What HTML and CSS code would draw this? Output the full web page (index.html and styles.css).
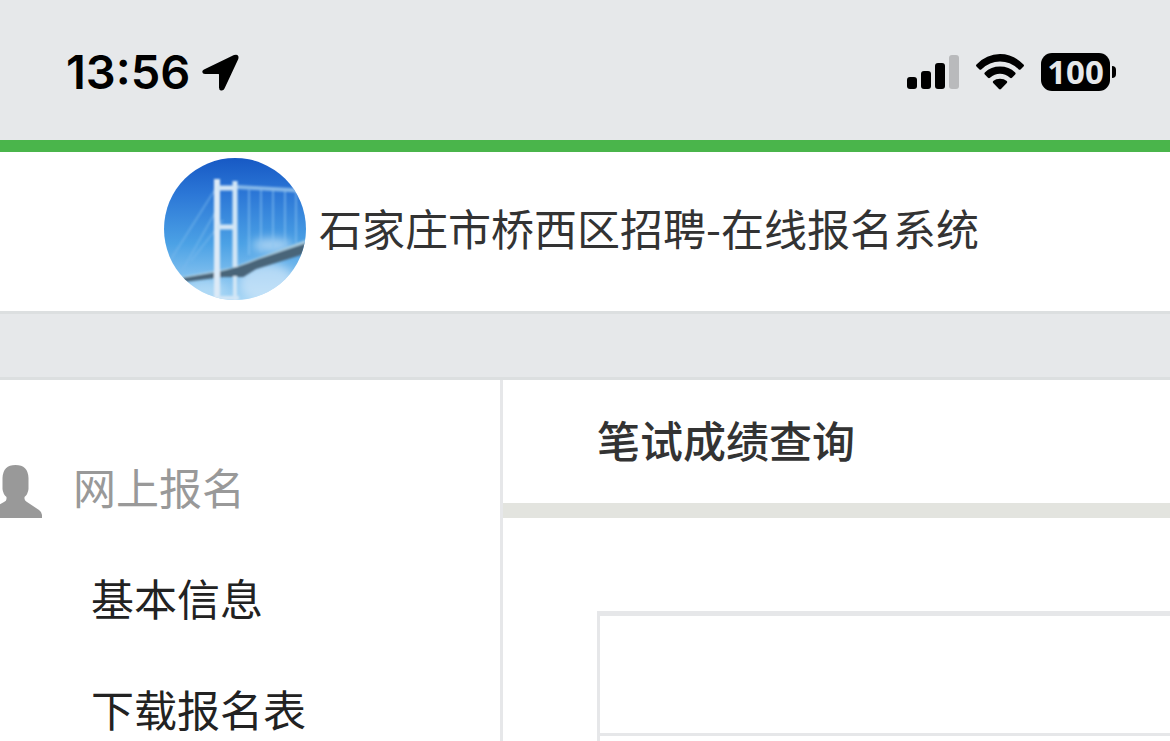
FILE: index.html
```html
<!DOCTYPE html>
<html lang="zh-CN">
<head>
<meta charset="utf-8">
<meta name="viewport" content="width=device-width, initial-scale=1">
<title>石家庄市桥西区招聘-在线报名系统</title>
<link rel="stylesheet" href="styles.css">
</head>
<body>
<div class="status">
  <div class="status-left">
    <time class="clock">13:56</time>
    <svg class="location" width="37" height="37" viewBox="0 0 37 37" aria-hidden="true"><path d="M2 15.500 32 1Q37.500-.5 36.300 5L22.500 34.500Q21.500 37 19 36.500 17 36 17 33.500V20.500Q17 20 16.500 20H3Q.5 20 .3 18 .2 16.500 2 15.500Z"/></svg>
  </div>
  <div class="status-right">
    <svg width="52" height="36" viewBox="0 0 52 36" aria-hidden="true"><rect y="23" width="10" height="12" rx="3"/><rect x="14" y="17" width="10" height="18" rx="3"/><rect x="28" y="9" width="10" height="26" rx="3"/><rect x="42" y="1" width="10" height="34" rx="3" fill="#b9babc"/></svg>
    <svg width="50" height="38" viewBox="0 0 50 38" aria-hidden="true"><path d="M1.500 11.500Q11.500 1 25 1T48.500 11.500Q49.500 12.500 48.500 13.500L45.500 16.500Q44.500 17.300 43.500 16.300 35.500 8.500 25 8.500T6.500 16.300Q5.500 17.300 4.500 16.500L1.500 13.500Q.5 12.500 1.500 11.500Z"/><path d="M9.800 19.500Q16 13.600 25 13.600T40.200 19.500Q41.200 20.500 40.200 21.500L37 24.700Q36 25.600 35 24.700 30.500 20.800 25 20.800T15 24.700Q14 25.600 13 24.700L9.800 21.500Q8.800 20.500 9.800 19.500Z"/><path d="M18.200 28Q21 25.800 25 25.800T31.800 28Q32.800 29 31.800 30L26 36Q25 36.800 24 36L18.200 30Q17.200 29 18.200 28Z"/></svg>
    <div class="battery"><span class="level">100</span><span class="cap"></span></div>
  </div>
</div>
<header class="header">
  <svg class="logo" width="144" height="144" viewBox="0 0 144 144" role="img" aria-label="桥">
    <defs>
      <linearGradient id="sky" x1="0" y1="0" x2="0" y2="1"><stop offset="0" stop-color="#1658c4"/><stop offset=".25" stop-color="#2b76d6"/><stop offset=".6" stop-color="#4ba1e5"/><stop offset="1" stop-color="#a5d5f5"/></linearGradient>
      <clipPath id="disc"><circle cx="72" cy="72" r="71"/></clipPath>
      <filter id="soft" x="-20%" y="-20%" width="140%" height="140%"><feGaussianBlur stdDeviation="1"/></filter>
      <filter id="haze" x="-50%" y="-50%" width="200%" height="200%"><feGaussianBlur stdDeviation="5"/></filter>
    </defs>
    <g clip-path="url(#disc)">
      <rect width="144" height="144" fill="url(#sky)"/>
      <g fill="#d5eafa" filter="url(#haze)"><ellipse cx="109" cy="88" rx="20" ry="7" opacity=".65"/><ellipse cx="104" cy="126" rx="28" ry="20" opacity=".65"/><ellipse cx="42" cy="132" rx="20" ry="10" opacity=".4"/></g>
      <g filter="url(#soft)" fill="none">
        <path d="M53 31 5 107M54 52 18 116M60 63 28 104" stroke="#79b9ee" stroke-width="2" opacity=".5"/>
        <path d="M74 30 144 34" stroke="#9bc8ee" stroke-width="4" opacity=".8"/>
        <path d="M86 33V98M98 33V95M110 34V92M122 34V89M133 35V86" stroke="#90c6f1" stroke-width="2" opacity=".5"/>
        <path d="M16 123 70 113 144 85" stroke="#a8cce1" stroke-width="5"/>
        <path d="M20 122 55 116Q75 112 96 103L144 87V95L93 111 80 119 60 119 20 124Z" fill="#496579" stroke="#496579" stroke-width="2"/>
        <path d="M54 22V144" stroke="#dceaf7" stroke-width="6"/>
        <path d="M72 24V110M54 31H72M54 70H72" stroke="#d2e6f6" stroke-width="5"/>
        <path d="M72 119V144M54 141H76" stroke="#d2e6f6" stroke-width="4"/>
      </g>
    </g>
  </svg>
  <h1 class="title">石家庄市桥西区招聘-在线报名系统</h1>
</header>
<div class="layout">
  <nav class="sidebar" aria-label="网上报名">
    <div class="group">
      <svg class="person" width="42" height="54" viewBox="0 0 42 54" aria-hidden="true"><path d="M2.500 14Q3 1 15.500 1T28.500 14V25Q28 30 24.500 33V35Q25 37 27 38L39 46Q42 48 42 51V54H-12V51Q-12 48-8 45L4 38Q6.500 37 6.500 35V33Q3 30 2.500 25Z"/></svg>
      <span>网上报名</span>
    </div>
    <a class="item" href="#basic">基本信息</a>
    <a class="item" href="#download">下载报名表</a>
  </nav>
  <main class="content">
    <h2 class="heading">笔试成绩查询</h2>
    <table class="results"><tbody><tr><td></td></tr><tr><td></td></tr></tbody></table>
  </main>
</div>
</body>
</html>
```
FILE: styles.css
```css
* {
  box-sizing: border-box;
}

body {
  margin: 0;
  height: 100vh;
  overflow: hidden;
  display: flex;
  flex-direction: column;
  background: #e6e8ea;
  color: #333;
  font: 43px/64px "Noto Sans CJK SC", sans-serif;
}

svg {
  display: block;
  flex: none;
}

.status {
  flex: none;
  height: 140px;
  padding: 4px 54px 0 66px;
  display: flex;
  align-items: center;
  justify-content: space-between;
  color: #000;
  font-family: Inter, sans-serif;
}

.status-left,
.status-right {
  display: flex;
  align-items: center;
  gap: 16px;
}

.status-left {
  gap: 12px;
}

.clock {
  font-size: 47px;
  font-weight: 600;
}

.battery {
  display: flex;
  align-items: center;
  gap: 2px;
}

.level {
  width: 69px;
  height: 38px;
  border-radius: 11px;
  background: #000;
  color: #e6e8ea;
  font-family: "Noto Sans", sans-serif;
  font-size: 33px;
  font-weight: 700;
  line-height: 38px;
  text-align: center;
}

.cap {
  width: 4px;
  height: 12px;
  border-radius: 0 6px 6px 0;
  background: #000;
}

.header {
  flex: none;
  height: 174px;
  padding: 4px 0 10px 163px;
  border-top: 12px solid #4ab54b;
  border-bottom: 3px solid #dcdfe0;
  background: #fff;
  display: flex;
  align-items: center;
  gap: 12px;
}

.title,
.heading {
  margin: 0;
  font-size: 43px;
  white-space: nowrap;
}

.title {
  padding-bottom: 4px;
  font-weight: 400;
}

.layout {
  flex: 1;
  min-height: 0;
  margin-top: 63px;
  border-top: 3px solid #dcdfe0;
  background: #fff;
  display: flex;
  overflow: hidden;
}

.sidebar {
  flex: none;
  width: 43%;
  padding-top: 74px;
  border-right: 3px solid #e6e7e9;
  display: flex;
  flex-direction: column;
  gap: 47px;
}

.group {
  display: flex;
  align-items: flex-end;
  gap: 31px;
  color: #999;
}

.person {
  fill: #999;
}

.item {
  padding-left: 91px;
  color: #222;
  text-decoration: none;
}

.content {
  flex: 1;
  min-width: 0;
  overflow: hidden;
}

.heading {
  padding: 27px 0 32px 94px;
  border-bottom: 15px solid #e3e4df;
  font-weight: 500;
}

.results {
  width: calc(100% - 94px);
  margin: 93px 0 0 94px;
  border-spacing: 0;
  border-top: 5px solid #e6e7e9;
  border-left: 3px solid #e6e7e9;
}

.results td {
  height: 120px;
  padding: 0;
  border-bottom: 3px solid #e6e7e9;
}
```
